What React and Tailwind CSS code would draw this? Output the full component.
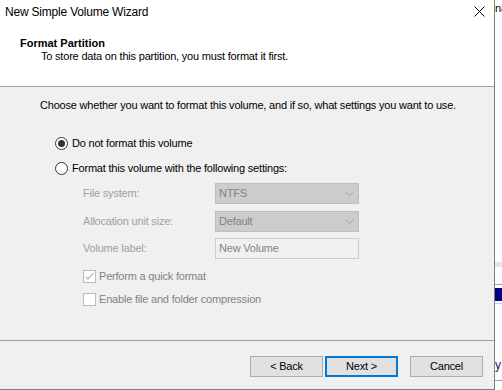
import React from "react";

function Radio({ checked, label }) {
  return (
    <div className="flex h-[13px] items-center pl-[55px]">
      <div className="flex h-[13px] w-[13px] items-center justify-center rounded-full border border-[#333333] bg-white">
        {checked && <div className="h-[7px] w-[7px] rounded-full bg-[#333333]" />}
      </div>
      <span className="ml-[4px] leading-[13px] text-black">{label}</span>
    </div>
  );
}

function FieldRow({ label, children, className = "" }) {
  return (
    <div className={"flex h-[21px] items-center pl-[83px] " + className}>
      <span className="w-[132px] text-[#a0a0a0] leading-[13px]">{label}</span>
      {children}
    </div>
  );
}

function Select({ value }) {
  return (
    <div className="flex h-[21px] w-[144px] items-center justify-between border border-[#bfbfbf] bg-[#cccccc] pl-[3px] pr-[4px] text-[#838383]">
      <span className="leading-[13px]">{value}</span>
      <svg width="9" height="5" viewBox="0 0 9 5">
        <path d="M0.5 0.5 L4.5 4.5 L8.5 0.5" fill="none" stroke="#a8a8a8" strokeWidth="1" />
      </svg>
    </div>
  );
}

function Check({ checked, label, className = "" }) {
  return (
    <div className={"flex h-[13px] items-center pl-[83px] " + className}>
      <div className="flex h-[13px] w-[13px] items-center justify-center border border-[#bcbcbc] bg-white">
        {checked && (
          <svg width="11" height="11" viewBox="0 0 11 11">
            <path d="M1.5 5.5 L4 8 L9.5 2" fill="none" stroke="#bcbcbc" strokeWidth="1.3" />
          </svg>
        )}
      </div>
      <span className="ml-[3px] leading-[13px] text-[#838383]">{label}</span>
    </div>
  );
}

function Button({ children, primary }) {
  return (
    <div
      className={
        "flex h-[21px] w-[73px] items-center justify-center bg-[#e1e1e1] leading-[13px] text-black " +
        (primary ? "border-2 border-[#0078d7]" : "border border-[#adadad]")
      }
    >
      {children}
    </div>
  );
}

export default function App() {
  return (
    <div className="flex h-[390px] w-[502px] overflow-hidden bg-white font-['Liberation_Sans',Arial,sans-serif] text-[11px] tracking-[-0.2px]">
      <div className="flex h-[390px] w-[495px] shrink-0 flex-col border-r border-[#7f7f7f]">
        {/* Header */}
        <div className="h-[87px] shrink-0 border-b border-[#a0a0a0] bg-white">
          <div className="flex h-[20px] justify-between pl-[5px] pr-[9px] pt-[4px]">
            <span className="text-[12px] leading-[16px] tracking-[-0.2px] text-black">New Simple Volume Wizard</span>
            <svg width="11" height="11" viewBox="0 0 11 11" className="mt-[2px]">
              <path d="M0.5 0.5 L10.5 10.5 M10.5 0.5 L0.5 10.5" stroke="#000" strokeWidth="1" />
            </svg>
          </div>
          <div className="mt-[17px] pl-[20px] font-bold leading-[13px] tracking-[0px] text-black">Format Partition</div>
          <div className="pl-[41px] leading-[13px] text-black">
            To store data on this partition, you must format it first.
          </div>
        </div>

        {/* Body */}
        <div className="h-[254px] shrink-0 border-b border-[#a0a0a0] bg-[#f0f0f0] pt-[12px]">
          <div className="pl-[40px] leading-[13px] text-black">
            Choose whether you want to format this volume, and if so, what settings you want to use.
          </div>
          <div className="mt-[25px]">
            <Radio checked label="Do not format this volume" />
          </div>
          <div className="mt-[12px]">
            <Radio label="Format this volume with the following settings:" />
          </div>
          <FieldRow label="File system:" className="mt-[8px]">
            <Select value="NTFS" />
          </FieldRow>
          <FieldRow label="Allocation unit size:" className="mt-[7px]">
            <Select value="Default" />
          </FieldRow>
          <FieldRow label="Volume label:" className="mt-[6px]">
            <div className="flex h-[21px] w-[144px] items-center border border-[#cccccc] bg-[#f0f0f0] pl-[3px] text-[#838383]">
              <span className="leading-[13px]">New Volume</span>
            </div>
          </FieldRow>
          <Check checked label="Perform a quick format" className="mt-[11px]" />
          <Check label="Enable file and folder compression" className="mt-[10px]" />
        </div>

        {/* Footer */}
        <div className="flex flex-1 justify-end border-b border-[#7f7f7f] bg-[#f0f0f0] pr-[11px] pt-[15px]">
          <Button>&lt; Back</Button>
          <div className="ml-[2px]">
            <Button primary>Next &gt;</Button>
          </div>
          <div className="ml-[12px]">
            <Button>Cancel</Button>
          </div>
        </div>
      </div>

      {/* Background window sliver */}
      <div className="flex w-[7px] shrink-0 flex-col overflow-hidden bg-white">
        <div className="w-[7px] overflow-hidden pt-[1px] text-[11px] leading-[14px] text-black whitespace-nowrap">na</div>
        <div className="mt-[247px] h-[5px] bg-[#e5e5e5]" />
        <div className="mt-[17px] h-[1px] bg-[#a0a0a0]" />
        <div className="mt-[3px] h-[13px] bg-[#000080]" />
        <div className="mt-[2px] h-[1px] bg-[#d0d0d0]" />
        <div className="mt-[54px] text-[12px] leading-[14px] text-[#1a1a60]">y</div>
        <div className="mt-[8px] h-[1px] bg-[#a0a0a0]" />
      </div>
    </div>
  );
}
